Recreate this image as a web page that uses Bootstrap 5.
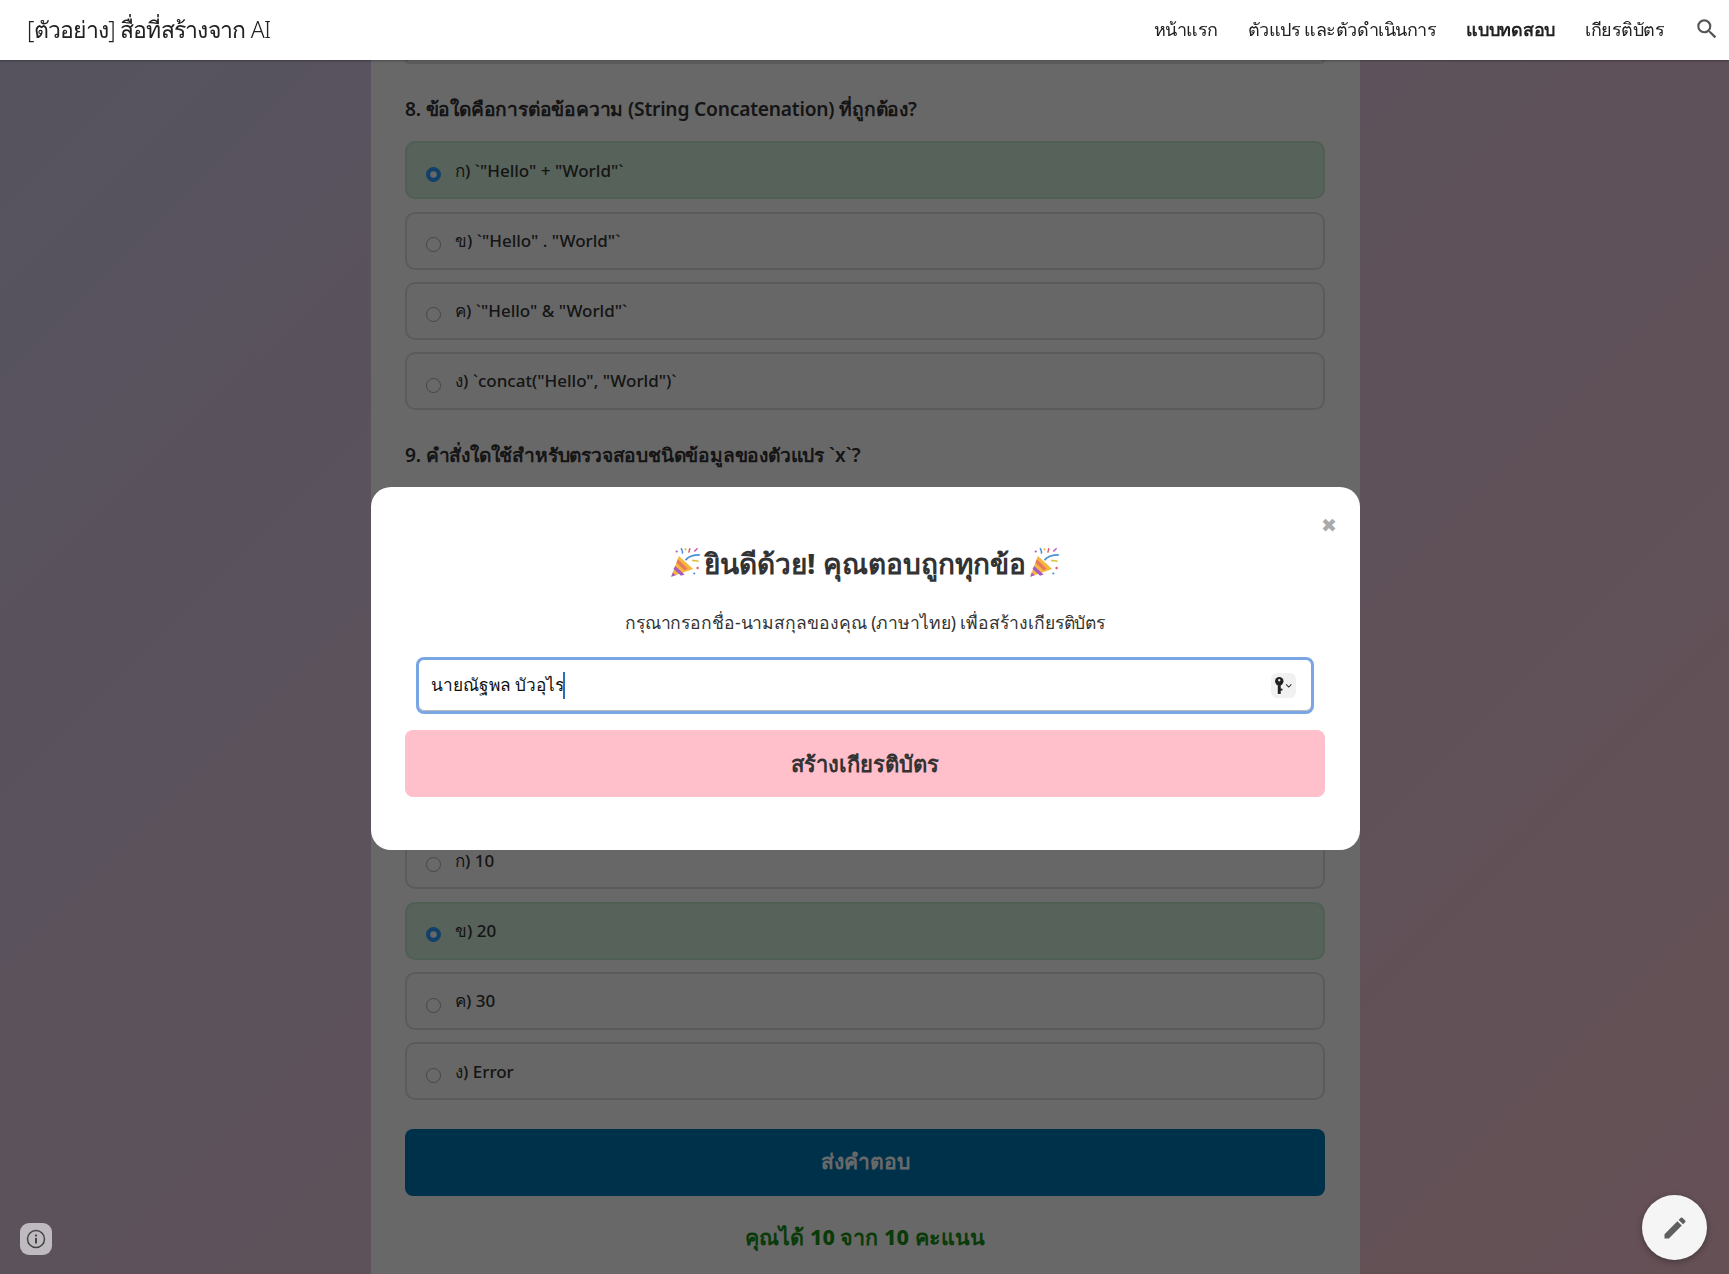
<!DOCTYPE html>
<html lang="th">
<head>
  <meta charset="UTF-8" />
  <title>[ตัวอย่าง] สื่อที่สร้างจาก AI</title>
  <meta name="viewport" content="width=device-width, initial-scale=1" />
  <link href="https://cdn.jsdelivr.net/npm/bootstrap@5.3.0/dist/css/bootstrap.min.css" rel="stylesheet" />
  <style>
    html, body {
      height: 100%;
      overflow: hidden;
    }
    body {
      background: linear-gradient(135deg, #d0cae8 0%, #f4c3cf 100%);
      font-family: "Noto Sans", sans-serif;
      color: #333;
    }
    .site-nav {
      height: 60px;
      padding: 0 9px 2px 27px;
      z-index: 1060;
      box-shadow: 0 1px 2px rgba(0, 0, 0, .3);
    }
    .site-title {
      font-size: 23px;
      font-weight: 300;
      letter-spacing: -.75px;
      color: #212121;
    }
    .site-link {
      font-size: 18px;
      font-weight: 300;
      letter-spacing: -.5px;
      color: #212121;
      text-decoration: none;
    }
    .site-link.current {
      font-weight: 600;
      letter-spacing: -.3px;
    }
    .site-links {
      gap: 30px;
    }
    .quiz-panel {
      width: 989px;
      margin-left: 371px;
      padding: 60px 35px 60px 34px;
      background: rgba(255, 255, 255, .96);
    }
    .opt-tail {
      height: 4px;
      margin-bottom: 12.3px;
      border: 2px solid #ddd;
      border-top: 0;
      border-radius: 0 0 10px 10px;
    }
    .quiz-q {
      margin: 0;
      height: 65px;
      padding-top: 17px;
      font-size: 19.2px;
      line-height: 32px;
      font-weight: 600;
      letter-spacing: -.2px;
    }
    .quiz-opt {
      height: 58px;
      margin-bottom: 12.3px;
      padding: 0 19px;
      background: #f9f9f9;
      border: 2px solid #ddd;
      border-radius: 10px;
      font-size: 17px;
      font-weight: 500;
      gap: 14px;
    }
    .quiz-opt.picked {
      background: #d4edda;
      border-color: #c3e6cb;
    }
    .quiz-opt .form-check-input {
      width: 15px;
      height: 15px;
      margin: 8px 0 0;
      flex-shrink: 0;
      background-color: #fff;
      border: 1.5px solid #aaa;
    }
    .quiz-opt .form-check-input:checked {
      background-color: #2b9bff;
      border-color: #2b9bff;
    }
    .quiz-hidden {
      height: 344px;
    }
    .quiz-submit {
      height: 67px;
      margin-top: 16px;
      background: #0077b6;
      border: 0;
      border-radius: 8px;
      color: #fff;
      font-size: 21px;
      font-weight: 600;
    }
    .quiz-score {
      margin-top: 25px;
      color: #189018;
      font-size: 21.5px;
      font-weight: 800;
    }
    .cert-overlay {
      top: 60px;
      left: 0;
      right: 0;
      bottom: 0;
      padding: 2px 0 0 2px;
      background: rgba(0, 0, 0, .59);
      z-index: 1050;
    }
    .cert-modal {
      width: 989px;
      height: 363px;
      padding: 46px 35px 0 34px;
      border: 0;
      border-radius: 20px;
      background: #fff;
    }
    .cert-close {
      top: 26px;
      right: 23px;
      color: #aaa;
      font-size: 19px;
      line-height: 24px;
    }
    .cert-title {
      margin: 0;
      gap: 2px;
      font-size: 28px;
      line-height: 60px;
      font-weight: 800;
      color: #333;
    }
    .cert-text {
      margin: 15px 0 21px;
      font-size: 17.5px;
      letter-spacing: -.08px;
      line-height: 28px;
    }
    .cert-field {
      margin: 0 11px 16px;
    }
    .cert-input {
      height: 57px;
      padding: 0 12px;
      border: 3px solid #7ba6e4;
      border-radius: 8px;
      font-size: 17.3px;
      font-weight: 500;
      color: #111;
      box-shadow: inset 0 -1px 0 #bbb;
    }
    .cert-input:focus {
      border-color: #7ba6e4;
      box-shadow: inset 0 -1px 0 #bbb;
    }
    .cert-caret {
      top: 15px;
      left: 147px;
      width: 2px;
      height: 27px;
      background: #2a6fb8;
    }
    .key-chip {
      top: 16px;
      right: 18px;
      width: 25px;
      height: 25px;
      border-radius: 6px;
      background: #f1f1f1;
    }
    .cert-btn {
      height: 67px;
      background: #ffc0cb;
      border: 0;
      border-radius: 8px;
      color: #333;
      font-size: 22px;
      font-weight: 800;
    }
    .cert-btn:hover {
      background: #ffc0cb;
      color: #333;
    }
    .info-chip {
      left: 20px;
      bottom: 19px;
      width: 32px;
      height: 32px;
      border-radius: 9px;
      background: #bfbabf;
      z-index: 1060;
    }
    .edit-fab {
      right: 22px;
      bottom: 14px;
      width: 65px;
      height: 65px;
      background: #f5f5f5;
      box-shadow: 0 2px 6px rgba(0, 0, 0, .3);
      z-index: 1060;
    }
  </style>
</head>
<body>
  <nav class="site-nav navbar fixed-top bg-white d-flex justify-content-between align-items-center">
    <span class="site-title">[ตัวอย่าง] สื่อที่สร้างจาก AI</span>
    <div class="site-links d-flex align-items-center">
      <a class="site-link" href="#">หน้าแรก</a>
      <a class="site-link" href="#">ตัวแปร และตัวดำเนินการ</a>
      <a class="site-link current" href="#">แบบทดสอบ</a>
      <a class="site-link" href="#">เกียรติบัตร</a>
      <svg width="26" height="26" viewBox="0 0 24 24" fill="#555"><path d="M15.5 14h-.79l-.28-.27A6.471 6.471 0 0 0 16 9.5 6.5 6.5 0 1 0 9.5 16c1.61 0 3.09-.59 4.23-1.57l.27.28v.79l5 4.99L20.49 19l-4.99-5zm-6 0C7.01 14 5 11.99 5 9.5S7.01 5 9.5 5 14 7.01 14 9.5 11.99 14 9.5 14z"/></svg>
    </div>
  </nav>

  <main class="quiz-panel">
    <div class="opt-tail"></div>

    <h5 class="quiz-q">8. ข้อใดคือการต่อข้อความ (String Concatenation) ที่ถูกต้อง?</h5>
    <label class="quiz-opt picked d-flex align-items-center"><input class="form-check-input" type="radio" name="q8" checked /><span>ก) `"Hello" + "World"`</span></label>
    <label class="quiz-opt d-flex align-items-center"><input class="form-check-input" type="radio" name="q8" /><span>ข) `"Hello" . "World"`</span></label>
    <label class="quiz-opt d-flex align-items-center"><input class="form-check-input" type="radio" name="q8" /><span>ค) `"Hello" &amp; "World"`</span></label>
    <label class="quiz-opt d-flex align-items-center"><input class="form-check-input" type="radio" name="q8" /><span>ง) `concat("Hello", "World")`</span></label>

    <h5 class="quiz-q">9. คำสั่งใดใช้สำหรับตรวจสอบชนิดข้อมูลของตัวแปร `x`?</h5>
    <!-- q9 options and q10 heading sit behind the popup -->
    <div class="quiz-hidden"></div>

    <label class="quiz-opt d-flex align-items-center"><input class="form-check-input" type="radio" name="q10" /><span>ก) 10</span></label>
    <label class="quiz-opt picked d-flex align-items-center"><input class="form-check-input" type="radio" name="q10" checked /><span>ข) 20</span></label>
    <label class="quiz-opt d-flex align-items-center"><input class="form-check-input" type="radio" name="q10" /><span>ค) 30</span></label>
    <label class="quiz-opt d-flex align-items-center"><input class="form-check-input" type="radio" name="q10" /><span>ง) Error</span></label>

    <button class="quiz-submit btn w-100" type="button">ส่งคำตอบ</button>
    <div class="quiz-score text-center">คุณได้ 10 จาก 10 คะแนน</div>
  </main>

  <div class="cert-overlay position-fixed d-flex align-items-center justify-content-center">
    <div class="cert-modal modal-content position-relative">
      <span class="cert-close position-absolute">✖</span>
      <h4 class="cert-title d-flex align-items-center justify-content-center">
        <svg width="33" height="33" viewBox="0 0 30 30"><use href="#popper" /></svg>
        <span>ยินดีด้วย! คุณตอบถูกทุกข้อ</span>
        <svg width="33" height="33" viewBox="0 0 30 30"><use href="#popper" /></svg>
      </h4>
      <p class="cert-text text-center">กรุณากรอกชื่อ-นามสกุลของคุณ (ภาษาไทย) เพื่อสร้างเกียรติบัตร</p>
      <div class="cert-field position-relative">
        <input class="cert-input form-control" type="text" value="นายณัฐพล บัวอุไร" />
        <span class="cert-caret position-absolute"></span>
        <span class="key-chip position-absolute d-flex align-items-center justify-content-center">
          <svg width="20" height="17" viewBox="0 0 19 16" fill="#222"><circle cx="5" cy="4" r="4"/><rect x="3.6" y="6" width="2.8" height="10"/><rect x="5" y="11" width="3" height="1.8"/><circle cx="5" cy="3" r="1.1" fill="#f1f1f1"/><path d="M11.5 7l2.5 2.5L16.5 7" fill="none" stroke="#333" stroke-width="1"/></svg>
        </span>
      </div>
      <button class="cert-btn btn w-100" type="button">สร้างเกียรติบัตร</button>
    </div>
  </div>

  <div class="info-chip position-fixed d-flex align-items-center justify-content-center">
    <svg width="20" height="20" viewBox="0 0 20 20" fill="none"><circle cx="10" cy="10" r="8.5" stroke="#444" stroke-width="1.5"/><rect x="9" y="9" width="2" height="5.5" fill="#444"/><rect x="9" y="5.5" width="2" height="2" fill="#444"/></svg>
  </div>

  <div class="edit-fab position-fixed rounded-circle d-flex align-items-center justify-content-center">
    <svg width="28" height="28" viewBox="0 0 24 24" fill="#5f5f5f"><path d="M3 17.25V21h3.75L17.81 9.94l-3.75-3.75L3 17.25zM20.71 7.04a1 1 0 0 0 0-1.41l-2.34-2.34a1 1 0 0 0-1.41 0l-1.83 1.83 3.75 3.75 1.83-1.83z"/></svg>
  </div>

  <svg width="0" height="0" class="position-absolute">
    <symbol id="popper" viewBox="0 0 30 30">
      <path d="M2 28L9 9l13 12z" fill="#f5b83d"/>
      <path d="M5.6 18.2l8.6 7.7-3.2 1.2-6.9-6.1z" fill="#a65cc4"/>
      <path d="M8 12l9 8.6-3 1.4-7.2-6.8z" fill="#e9795b"/>
      <path d="M2 28l1.4-3.8 2.8 2.4z" fill="#a65cc4"/>
      <path d="M15 13c2-3 6-5 13-5" fill="none" stroke="#4a90d9" stroke-width="1.6"/>
      <path d="M12 7c1-2 0-3-1-5" fill="none" stroke="#4a90d9" stroke-width="1.4"/>
      <path d="M18 6l1-4" fill="none" stroke="#e05a6d" stroke-width="1.4"/>
      <path d="M23 5l3-3" fill="none" stroke="#c45cc0" stroke-width="1.4"/>
      <path d="M21 13c2 1 4 0 6 1" fill="none" stroke="#d9c23d" stroke-width="1.4"/>
      <circle cx="26" cy="20" r="1.1" fill="#e05a6d"/>
      <circle cx="23" cy="25" r="1" fill="#4a90d9"/>
      <circle cx="15" cy="3" r="1" fill="#e8b93d"/>
      <circle cx="7" cy="5" r="1" fill="#a65cc4"/>
    </symbol>
  </svg>

  <script src="https://cdn.jsdelivr.net/npm/bootstrap@5.3.0/dist/js/bootstrap.bundle.min.js"></script>
</body>
</html>
